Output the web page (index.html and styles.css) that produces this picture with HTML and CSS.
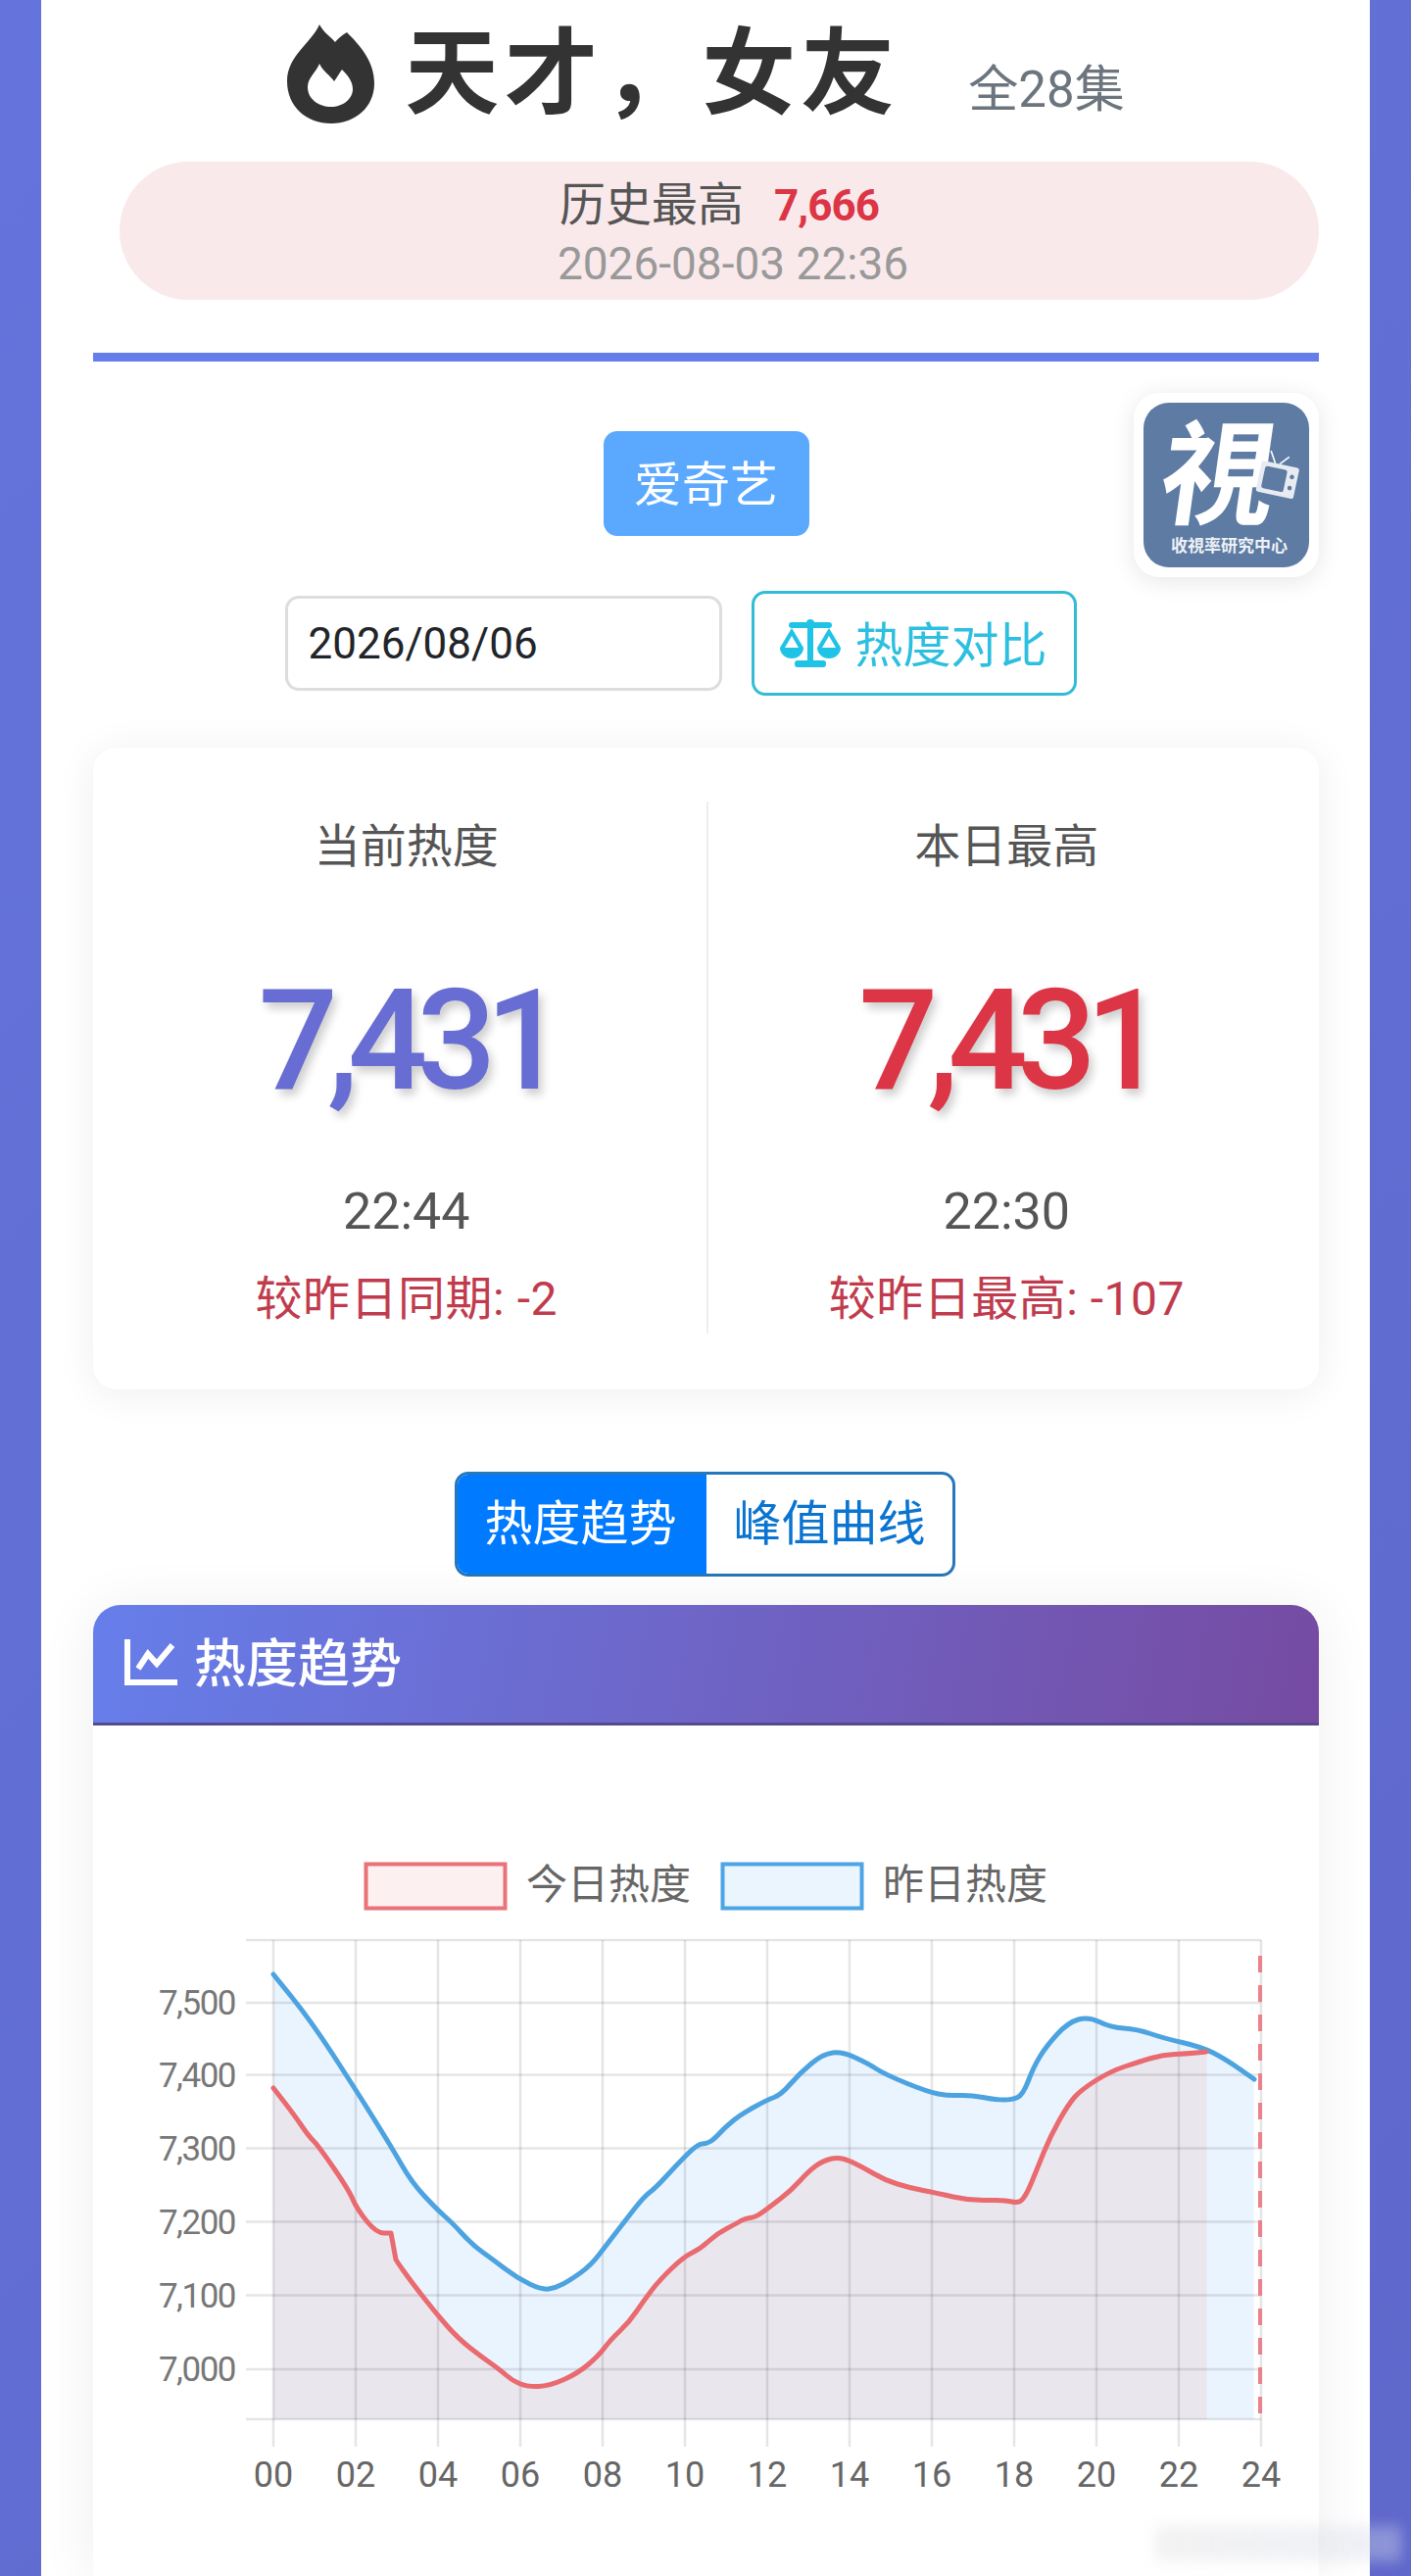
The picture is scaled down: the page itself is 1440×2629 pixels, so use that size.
FILE: index.html
```html
<!DOCTYPE html>
<html lang="zh-CN">
<head>
  <meta charset="UTF-8">
  <meta name="viewport" content="width=device-width, initial-scale=1.0">
  <title>天才，女友 热度</title>
  <link rel="stylesheet" href="styles.css">
</head>
<body>
  <div class="panel">
    <!-- 标题 -->
    <div class="title-row">
      <svg class="flame" viewBox="0 0 89 101">
        <path fill-rule="evenodd" d="M33 0C37 8 44 12 49 18C52 14 56 11 61 8C75 22 89 38 89 60C89 84 70 101 45 101C20 101 0 84 0 58C0 32 24 20 33 0ZM33 40C36 47 44 52 48 58C51 54 53 50 56 46C62 52 67 58 67 66C67 76 57 84 45 84C32 84 21 76 21 64C21 54 29 50 33 40Z"/>
      </svg>
      <h1 class="title">天才，女友</h1>
      <span class="episodes">全28集</span>
    </div>

    <div class="record">
      <div class="record-top">历史最高<b class="record-num">7,666</b></div>
      <div class="record-date">2026-08-03 22:36</div>
    </div>

    <div class="rule"></div>

    <div class="platform-row">
      <span class="platform-btn">爱奇艺</span>
      <div class="logo">
        <div class="logo-inner">
          <span class="logo-char">視</span>
          <svg class="logo-tv" viewBox="0 0 36 40">
            <path d="M13 11L7 1M17 11L24 3" stroke="#fff" stroke-width="1.4" fill="none"/>
            <rect x="1" y="11" width="34" height="28" rx="2" fill="#e8ecf2"/>
            <rect x="5" y="15" width="20" height="20" rx="2" fill="#5d7ba3"/>
            <circle cx="30" cy="20" r="2" fill="#5d7ba3"/>
            <circle cx="30" cy="30" r="2" fill="#5d7ba3"/>
          </svg>
          <span class="logo-text">收視率研究中心</span>
        </div>
      </div>
    </div>

    <div class="controls">
      <div class="date-input">2026/08/06</div>
      <div class="compare-btn">
        <svg class="scale-icon" viewBox="0 0 62 49">
          <rect x="9" y="3" width="44" height="6" rx="3"/>
          <circle cx="31" cy="4" r="4"/>
          <rect x="28" y="3" width="6" height="40"/>
          <rect x="15" y="42" width="32" height="7" rx="3"/>
          <path fill-rule="evenodd" d="M12 9L0 29A12 11 0 0 0 24 29ZM12 17L5 29H19Z"/>
          <path fill-rule="evenodd" d="M50 9L38 29A12 11 0 0 0 62 29ZM50 17L43 29H57Z"/>
        </svg>
        <span class="compare-text">热度对比</span>
      </div>
    </div>

    <!-- 当前数据 -->
    <div class="stats">
      <div class="stat">
        <div class="stat-label">当前热度</div>
        <div class="stat-value blue">7,431</div>
        <div class="stat-time">22:44</div>
        <div class="stat-diff">较昨日同期: -2</div>
      </div>
      <div class="stat stat-right">
        <div class="stat-label">本日最高</div>
        <div class="stat-value red">7,431</div>
        <div class="stat-time">22:30</div>
        <div class="stat-diff">较昨日最高: -107</div>
      </div>
    </div>

    <div class="tabs">
      <span class="tab active">热度趋势</span>
      <span class="tab">峰值曲线</span>
    </div>

    <!-- 图表 -->
    <div class="chart-card">
      <div class="chart-header">
        <svg class="line-icon" viewBox="0 0 54 47">
          <path d="M3 0V44H54" fill="none" stroke="#fff" stroke-width="6"/>
          <path d="M14 30L24 15L33 25L49 6" fill="none" stroke="#fff" stroke-width="6"/>
        </svg>
        <span class="chart-title">热度趋势</span>
      </div>
      <svg class="chart" viewBox="95 1761 1251 868">
        <g class="legend">
          <rect x="373.500" y="1902.500" width="142" height="45" fill="#fdf0f0" stroke="#ea7379" stroke-width="4"/>
          <text x="537" y="1938">今日热度</text>
          <rect x="737.500" y="1902.500" width="142" height="45" fill="#ebf5fd" stroke="#4ea5e6" stroke-width="4"/>
          <text x="901" y="1938">昨日热度</text>
        </g>

        <polygon fill="#eaf4fe" points="279,2469 279.3,2014.6 316.6,2062.4 362.2,2130.6 399.5,2192.5 420.2,2226.6 445,2254.4 461.7,2269.3 482.4,2290.6 503.1,2306.4 528,2324.8 552.9,2337.1 567.4,2334.6 581.9,2326.9 602.6,2312 619.2,2290.6 635.8,2269.3 656.5,2242.4 669,2233 689.7,2209.6 712.5,2188.2 720.8,2188.2 729.1,2182.7 739.5,2171.2 756,2158.4 783,2143.4 796.9,2138.3 816.4,2115.7 840.2,2095.7 859.7,2094.4 885.8,2105.9 903.1,2117 946.5,2134.9 968.2,2139.2 989.8,2138.3 1015.9,2143.4 1033.2,2142.6 1044,2138.3 1054.9,2109.3 1067.9,2088 1089.6,2063.7 1111.3,2058.1 1133,2068.8 1161.1,2070.9 1187.1,2079.5 1226.2,2088.8 1250,2100.8 1279.5,2122.1 1279.5,2469"/>
        <polygon fill="#ee6a64" fill-opacity="0.1" points="279,2469 279.3,2130.6 300,2158.4 314.5,2179.7 324.9,2190.4 356,2235.2 364.2,2254.4 383.7,2279.1 399.5,2279.1 404.5,2307.7 420.2,2329 445,2361 467.9,2386.6 490.7,2404.5 511.4,2418.6 521.8,2429.3 538.4,2436.1 561.2,2434.8 590.2,2421.6 610.9,2403.7 623.4,2387.9 642,2369.6 656.5,2348.2 673.1,2326.9 698,2303.4 714.6,2294.9 731.2,2280 751.9,2269.3 760.2,2264 770.8,2262.9 786,2252.2 807.7,2235.2 825,2216 840.2,2205.3 857.6,2201 881.4,2211.7 903.1,2224.5 929.1,2233 955.1,2238.2 989.8,2245.8 1024.5,2245 1039.7,2248.8 1048.4,2239.4 1059.2,2211.7 1072.2,2179.7 1089.6,2147.7 1102.6,2132.8 1133,2113.6 1163.3,2103.8 1187.1,2097.4 1211,2095.7 1231.4,2094 1231.4,2469"/>

        <g class="grid">
          <path d="M251 1980H1287M251 2044H1287M251 2117.500H1287M251 2192.500H1287M251 2267.500H1287M251 2342.500H1287M251 2418H1287M251 2469H1287"/>
          <path d="M279 1980V2497M363 1980V2497M447 1980V2497M531 1980V2497M615 1980V2497M699 1980V2497M783 1980V2497M867 1980V2497M951 1980V2497M1035 1980V2497M1119 1980V2497M1203 1980V2497M1287 1980V2497"/>
        </g>

        <path class="curve-blue" d="M279 2015L298 2038.500Q317 2062 339.500 2096.500Q362 2131 381 2161.500Q400 2192 410 2209.500Q420 2227 432.500 2240.500Q445 2254 453.500 2261.500Q462 2269 472 2280Q482 2291 492.500 2298.500Q503 2306 515.500 2315.500Q528 2325 540.500 2331Q553 2337 560 2336Q567 2335 574.500 2331Q582 2327 592.500 2319.500Q603 2312 611 2301.500Q619 2291 627.500 2280Q636 2269 646.500 2255.500Q657 2242 663 2237.500Q669 2233 679.500 2221.500Q690 2210 701 2199Q712 2188 716.500 2188Q721 2188 725 2185.500Q729 2183 734.500 2177Q740 2171 748 2164.500Q756 2158 769.500 2150.500Q783 2143 790 2140.500Q797 2138 806.500 2127Q816 2116 828 2106Q840 2096 850 2095Q860 2094 873 2100Q886 2106 894.500 2111.500Q903 2117 925 2126Q947 2135 957.500 2137Q968 2139 979 2138.500Q990 2138 1003 2140.500Q1016 2143 1024.500 2143Q1033 2143 1038.500 2140.500Q1044 2138 1049.500 2123.500Q1055 2109 1061.500 2098.500Q1068 2088 1079 2076Q1090 2064 1100.500 2061Q1111 2058 1122 2063.500Q1133 2069 1147 2070Q1161 2071 1174 2075.500Q1187 2080 1206.500 2084.500Q1226 2089 1238 2095Q1250 2101 1265 2111.500L1280 2122"/>
        <path class="curve-red" d="M279 2131L289.500 2144.500Q300 2158 307.500 2169Q315 2180 320 2185Q325 2190 340.500 2212.500Q356 2235 360 2244.500Q364 2254 374 2266.500Q384 2279 392 2279L399 2279L404 2306Q405 2308 412.500 2318.500Q420 2329 432.500 2345Q445 2361 456.500 2374Q468 2387 479.500 2396Q491 2405 501 2412Q511 2419 516.500 2424Q522 2429 530 2432.500Q538 2436 549.500 2435.500Q561 2435 575.500 2428.500Q590 2422 600.500 2413Q611 2404 617 2396Q623 2388 632.500 2379Q642 2370 649.500 2359Q657 2348 665 2337.500Q673 2327 685.500 2315Q698 2303 706.500 2299Q715 2295 723 2287.500Q731 2280 741.500 2274.500Q752 2269 756 2266.500Q760 2264 765.500 2263.500Q771 2263 778.500 2257.500Q786 2252 797 2243.500Q808 2235 816.500 2225.500Q825 2216 832.500 2210.500Q840 2205 849 2203Q858 2201 869.500 2206.500Q881 2212 892 2218.500Q903 2225 916 2229Q929 2233 942 2235.500Q955 2238 972.500 2242Q990 2246 1007.500 2245.500Q1025 2245 1032.500 2247Q1040 2249 1044 2244Q1048 2239 1053.500 2225.500Q1059 2212 1065.500 2196Q1072 2180 1081 2164Q1090 2148 1096.500 2140.500Q1103 2133 1118 2123.500Q1133 2114 1148 2109Q1163 2104 1175 2100.500Q1187 2097 1199 2096.500Q1211 2096 1221 2095L1231 2094"/>
        <path class="now-line" d="M1286 1996V2469"/>

        <g class="y-labels">
          <text x="240" y="2056">7,500</text>
          <text x="240" y="2130">7,400</text>
          <text x="240" y="2205">7,300</text>
          <text x="240" y="2280">7,200</text>
          <text x="240" y="2355">7,100</text>
          <text x="240" y="2430">7,000</text>
        </g>
        <g class="x-labels">
          <text x="279" y="2538">00</text>
          <text x="363" y="2538">02</text>
          <text x="447" y="2538">04</text>
          <text x="531" y="2538">06</text>
          <text x="615" y="2538">08</text>
          <text x="699" y="2538">10</text>
          <text x="783" y="2538">12</text>
          <text x="867" y="2538">14</text>
          <text x="951" y="2538">16</text>
          <text x="1035" y="2538">18</text>
          <text x="1119" y="2538">20</text>
          <text x="1203" y="2538">22</text>
          <text x="1287" y="2538">24</text>
        </g>
      </svg>
    </div>
  </div>
  <div class="watermark"></div>
</body>
</html>
```

FILE: styles.css
```css
/* 基础 */
html, body {
  height: 2629px;
  overflow: hidden;
}
body {
  margin: 0;
  position: relative;
  font-family: Roboto, 'Noto Sans CJK SC', sans-serif;
  background: linear-gradient(135deg, #6474dc 0%, #5f68cb 100%);
  color: #333;
}
.panel {
  margin: 0 42px;
  height: 2629px;
  padding: 0 52px 0 53px;
  box-sizing: border-box;
  background-color: #fff;
  overflow: hidden;
}

/* 标题 */
.title-row {
  display: flex;
  align-items: center;
  justify-content: center;
  height: 150px;
}
.flame {
  width: 89px;
  height: 101px;
  fill: #333;
  margin-right: 31px;
}
.title {
  margin: 0;
  font-size: 96px;
  font-weight: 700;
  letter-spacing: 5px;
  line-height: 1;
}
.episodes {
  margin: 24px 0 0 70px;
  font-size: 51px;
  color: #6c757d;
}

/* 历史最高 */
.record {
  margin: 15px 0 0 27px;
  height: 141px;
  border-radius: 71px;
  background-color: #f9e9eb;
  text-align: center;
}
.record-top {
  padding-top: 15px;
  font-size: 47px;
  line-height: 58px;
  color: #555;
}
.record-num {
  margin-left: 31px;
  font-size: 44px;
  color: #dc3545;
  letter-spacing: -1px;
}
.record-date {
  padding-left: 28px;
  font-size: 46px;
  line-height: 60px;
  color: #999;
}
.rule {
  margin-top: 54px;
  height: 9px;
  background-color: #667eea;
}

/* 平台 */
.platform-row {
  position: relative;
  display: flex;
  justify-content: center;
  padding-top: 71px;
}
.platform-btn {
  width: 210px;
  height: 107px;
  line-height: 111px;
  border-radius: 14px;
  background-color: #5aa9ff;
  color: #fff;
  font-size: 49px;
  text-align: center;
}
.logo {
  position: absolute;
  top: 32px;
  right: 0;
  width: 189px;
  height: 188px;
  padding: 10px;
  box-sizing: border-box;
  border-radius: 26px;
  background-color: #fff;
  box-shadow: 0 4px 24px rgba(0, 0, 0, 0.1);
}
.logo-inner {
  position: relative;
  height: 168px;
  border-radius: 26px;
  background-color: #5d7ba3;
  color: #fff;
  text-align: center;
  overflow: hidden;
}
.logo-char {
  display: block;
  font-family: 'Noto Sans CJK TC', sans-serif;
  font-size: 116px;
  font-weight: 700;
  line-height: 128px;
  transform: translateX(-6px) skewX(-8deg);
}
.logo-tv {
  position: absolute;
  top: 50px;
  right: 10px;
  width: 42px;
  height: 46px;
  transform: rotate(12deg);
}
.logo-text {
  display: block;
  font-family: 'Noto Sans CJK TC', sans-serif;
  font-size: 17px;
  font-weight: 700;
  line-height: 20px;
  margin-top: 7px;
  padding-left: 6px;
  color: #eef1f5;
}

/* 日期与对比 */
.controls {
  display: flex;
  align-items: center;
  justify-content: center;
  gap: 30px;
  padding-right: 52px;
  margin-top: 56px;
}
.date-input {
  width: 446px;
  height: 97px;
  box-sizing: border-box;
  padding-left: 21px;
  line-height: 93px;
  border: 3px solid #ddd;
  border-radius: 14px;
  font-size: 44px;
  color: #212529;
}
.compare-btn {
  display: flex;
  align-items: center;
  justify-content: center;
  gap: 14px;
  width: 332px;
  height: 107px;
  box-sizing: border-box;
  border: 3px solid #33bcd6;
  border-radius: 14px;
  font-size: 49px;
  color: #2dbfe0;
}
.compare-text {
  margin-top: -5px;
}
.scale-icon {
  width: 62px;
  height: 49px;
  fill: #1fc3e6;
}

/* 数据卡片 */
.stats {
  display: grid;
  grid-template-columns: 1fr 1fr;
  margin-top: 53px;
  height: 655px;
  box-sizing: border-box;
  padding: 55px 14px 0;
  border-radius: 24px;
  background-color: #fff;
  box-shadow: 0 4px 40px rgba(0, 0, 0, 0.07);
}
.stat {
  display: flex;
  flex-direction: column;
  align-items: center;
  height: 543px;
  box-sizing: border-box;
}
.stat-right {
  border-left: 2px solid #eee;
}
.stat-label {
  font-size: 47px;
  line-height: 92px;
  color: #555;
}
.stat-value {
  margin-top: 52px;
  font-size: 143px;
  font-weight: 500;
  line-height: 200px;
  letter-spacing: -11px;
  text-shadow: 4px 6px 10px rgba(0, 0, 0, 0.2);
}
.stat-value.blue {
  color: #676dd2;
}
.stat-value.red {
  color: #dc3545;
}
.stat-time {
  margin-top: 40px;
  font-size: 52px;
  line-height: 70px;
  color: #555;
}
.stat-diff {
  margin-top: 24px;
  font-size: 48px;
  line-height: 60px;
  letter-spacing: 0.5px;
  color: #c03b4d;
}

/* 切换 */
.tabs {
  display: flex;
  width: 511px;
  height: 107px;
  box-sizing: border-box;
  margin: 84px 0 0 369px;
  border: 3px solid #2677bb;
  border-radius: 14px;
  overflow: hidden;
}
.tab {
  flex: 1;
  line-height: 101px;
  text-align: center;
  font-size: 49px;
  color: #0a74d0;
}
.tab.active {
  flex: none;
  width: 257px;
  margin: -3px 0 -3px -3px;
  line-height: 107px;
  background-color: #007bff;
  color: #fff;
}

/* 图表 */
.chart-card {
  margin-top: 29px;
  border-radius: 28px 28px 0 0;
  background-color: #fff;
  box-shadow: 0 4px 60px rgba(0, 0, 0, 0.07);
}
.chart-header {
  display: flex;
  align-items: center;
  gap: 17px;
  height: 123px;
  box-sizing: border-box;
  padding: 0 0 3px 32px;
  border-bottom: 3px solid #554b8c;
  border-radius: 28px 28px 0 0;
  background: linear-gradient(100deg, #667eea 0%, #764ba2 100%);
  color: #fff;
  font-size: 53px;
  font-weight: 500;
}
.chart-title {
  margin-top: -6px;
}
.line-icon {
  width: 54px;
  height: 47px;
}
.chart {
  display: block;
  width: 1251px;
  height: 868px;
}
.legend text {
  font-size: 42px;
  fill: #666;
}
.grid path {
  fill: none;
  stroke: rgba(0, 0, 0, 0.1);
  stroke-width: 2.500;
}
.curve-blue, .curve-red {
  fill: none;
  stroke-width: 5;
  stroke-linejoin: round;
  stroke-linecap: round;
}
.curve-blue {
  stroke: #4ca3e0;
}
.curve-red {
  stroke: #e96a6f;
}
.now-line {
  fill: none;
  stroke: #ea828c;
  stroke-width: 4;
  stroke-dasharray: 17 13;
}
.y-labels text {
  font-size: 35px;
  fill: #777;
  text-anchor: end;
  letter-spacing: -1.500px;
}
.x-labels text {
  font-size: 36px;
  fill: #666;
  text-anchor: middle;
}

/* 水印 */
.watermark {
  position: absolute;
  left: 1180px;
  top: 2578px;
  width: 250px;
  height: 36px;
  background: linear-gradient(90deg, rgba(190, 190, 190, 0.2), rgba(215, 220, 235, 0.4));
  filter: blur(7px);
}
```
